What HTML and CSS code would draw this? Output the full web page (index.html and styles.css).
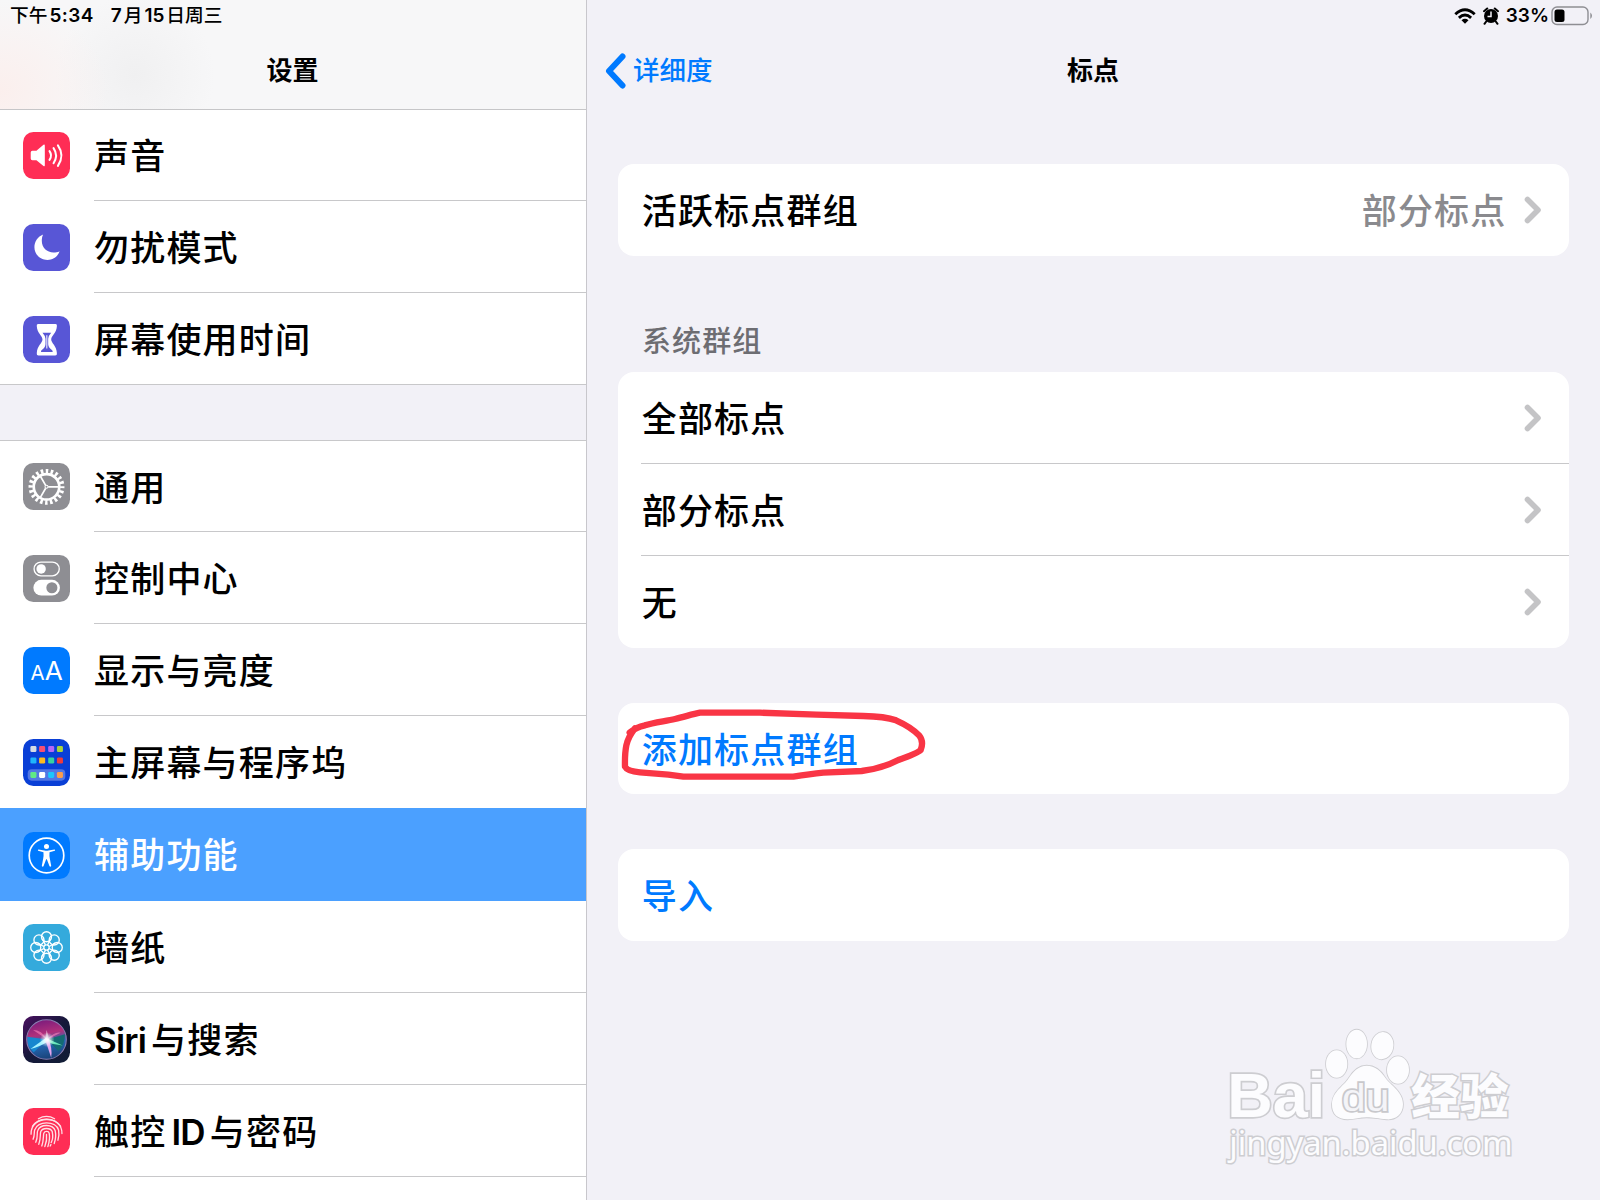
FILE: index.html
```html
<!DOCTYPE html>
<html lang="zh-CN">
  <head>
    <title>设置</title>
    <meta charset="utf-8">
    <link rel="stylesheet" href="styles.css">
  </head>
  <body>
    <div class="screen">
      <div class="sidebar">
        <div class="side-head">
          <div class="status"><span>下午</span><b class="time">5:34</b><b>7</b><span>月</span><b>15</b><span>日周三</span></div>
          <div class="title">设置</div>
        </div>
        <div class="list first">
          <div class="row">
            <svg class="icon" viewBox="0 0 140 140">
              <rect width="140" height="140" rx="31" fill="#ff2d55"/>
              <path d="M28 56H40L61 38Q65 36 65 41V99Q65 104 61 101L40 84H28Q23 84 23 79V61Q23 56 28 56Z" fill="#fff"/>
              <path d="M79 57Q88 70 79 83M91 48Q106 70 91 93M104 40Q125 70 104 101" fill="none" stroke="#fff" stroke-width="6" stroke-linecap="round"/>
            </svg>
            <div class="label">声音</div>
          </div>
          <div class="row">
            <svg class="icon" viewBox="0 0 140 140">
              <rect width="140" height="140" rx="31" fill="#5856d6"/>
              <path d="M60 31C44 37 34 52 34 69C34 90 51 107 73 107C90 107 104 97 109 81C103 84 97 85 91 85C71 85 56 70 56 50C56 43 57 37 60 31Z" fill="#fff"/>
            </svg>
            <div class="label">勿扰模式</div>
          </div>
          <div class="row">
            <svg class="icon" viewBox="0 0 140 140">
              <rect width="140" height="140" rx="31" fill="#5856d6"/>
              <path d="M45 24H97Q102 24 101 30C100 52 84 59 84 70S100 88 101 111Q102 118 96 118H46Q40 118 41 111C42 88 58 81 58 70S42 52 41 30Q40 24 45 24Z" fill="#fff"/>
              <path d="M58 50H84Q75 60 75 68V84Q76 95 86 101Q90 104 88 107H54Q52 104 56 101Q66 95 67 84V68Q67 60 58 50Z" fill="#5856d6"/>
              <path d="M71 57V97" stroke="#fff" stroke-width="3"/>
            </svg>
            <div class="label">屏幕使用时间</div>
          </div>
        </div>
        <div class="gap"></div>
        <div class="list second">
          <div class="row">
            <svg class="icon" viewBox="0 0 140 140">
              <rect width="140" height="140" rx="31" fill="#8e8e93"/>
              <g fill="none" stroke="#fff">
                <circle cx="70" cy="71" r="47" stroke-width="13" stroke-dasharray="7.5 7.265" stroke-dashoffset="3.700"/>
                <circle cx="70" cy="71" r="38" stroke-width="8"/>
                <path d="M75 71H108M67.500 66.700L51 38M67.500 75.300L51 104" stroke-width="5"/>
                <circle cx="70" cy="71" r="4.500" stroke-width="3"/>
              </g>
            </svg>
            <div class="label">通用</div>
          </div>
          <div class="row">
            <svg class="icon" viewBox="0 0 140 140">
              <rect width="140" height="140" rx="31" fill="#8e8e93"/>
              <rect x="33" y="21" width="75" height="41" rx="20.500" fill="none" stroke="#fff" stroke-width="4"/>
              <circle cx="54" cy="41.500" r="14" fill="#fff"/>
              <rect x="31" y="74" width="79" height="47" rx="23.500" fill="#fff"/>
              <circle cx="86" cy="97.500" r="16.500" fill="#8e8e93"/>
            </svg>
            <div class="label">控制中心</div>
          </div>
          <div class="row">
            <svg class="icon" viewBox="0 0 140 140">
              <rect width="140" height="140" rx="31" fill="#007aff"/>
              <g class="aa"><text x="22" y="99" font-size="61">A</text><text x="65" y="99" font-size="78">A</text></g>
            </svg>
            <div class="label">显示与亮度</div>
          </div>
          <div class="row before-selected">
            <svg class="icon" viewBox="0 0 140 140">
              <rect width="140" height="140" rx="31" fill="#0a3fd6"/>
              <rect x="14" y="90" width="112" height="34" rx="12" fill="#5277e4"/>
              <g>
                <rect x="22" y="21" width="18" height="18" rx="4" fill="#d6dbe4"/>
                <rect x="48" y="21" width="18" height="18" rx="4" fill="#f94f73"/>
                <rect x="75" y="21" width="18" height="18" rx="4" fill="#b666f6"/>
                <rect x="101" y="21" width="18" height="18" rx="4" fill="#a9d43c"/>
                <rect x="22" y="55" width="18" height="18" rx="4" fill="#1fb4fa"/>
                <rect x="48" y="55" width="18" height="18" rx="4" fill="#fdbb1f"/>
                <rect x="75" y="55" width="18" height="18" rx="4" fill="#36d3a0"/>
                <rect x="101" y="55" width="18" height="18" rx="4" fill="#f23a3a"/>
                <rect x="22" y="98" width="18" height="18" rx="4" fill="#60ea84"/>
                <rect x="48" y="98" width="18" height="18" rx="4" fill="#fff"/>
                <rect x="75" y="98" width="18" height="18" rx="4" fill="#1cc6fb"/>
                <rect x="101" y="98" width="18" height="18" rx="4" fill="#fb9d4b"/>
              </g>
            </svg>
            <div class="label">主屏幕与程序坞</div>
          </div>
          <div class="row selected">
            <svg class="icon" viewBox="0 0 140 140">
              <rect width="140" height="140" rx="31" fill="#007aff"/>
              <circle cx="70" cy="70" r="51.500" fill="none" stroke="#fff" stroke-width="5"/>
              <circle cx="70" cy="43" r="7.500" fill="#fff"/>
              <path d="M46 52L64 55Q70 56 76 55L94 52Q97 53 95 56L79 60Q78 72 80 80L84 101Q82 105 79 102L71 81H69L61 102Q58 105 56 101L60 80Q62 72 61 60L45 56Q43 53 46 52Z" fill="#fff"/>
            </svg>
            <div class="label">辅助功能</div>
          </div>
          <div class="row">
            <svg class="icon" viewBox="0 0 140 140">
              <rect width="140" height="140" rx="31" fill="#34aadc"/>
              <g fill="none" stroke="#fff" stroke-width="4">
                <circle cx="70" cy="38" r="15"/>
                <circle cx="93" cy="47.500" r="15"/>
                <circle cx="102" cy="70" r="15"/>
                <circle cx="93" cy="93" r="15"/>
                <circle cx="70" cy="102" r="15"/>
                <circle cx="47.500" cy="93" r="15"/>
                <circle cx="38" cy="70" r="15"/>
                <circle cx="47.500" cy="47.500" r="15"/>
                <circle cx="70" cy="70" r="8"/>
                <path d="M57 44L67 62M83 44L73 62M96 57L78 67M96 83L78 73M83 96L73 78M57 96L67 78M44 83L62 73M44 57L62 67"/>
              </g>
            </svg>
            <div class="label">墙纸</div>
          </div>
          <div class="row">
            <svg class="icon" viewBox="0 0 140 140">
              <defs>
                <linearGradient id="siri-bg" x1="0" y1="0" x2="1" y2="1">
                  <stop offset="0" stop-color="#4a1060"/>
                  <stop offset=".5" stop-color="#15183a"/>
                  <stop offset="1" stop-color="#101d35"/>
                </linearGradient>
                <linearGradient id="siri-orb" x1=".4" y1="0" x2=".6" y2="1">
                  <stop offset="0" stop-color="#7c1c7c"/>
                  <stop offset=".35" stop-color="#b0307c"/>
                  <stop offset=".6" stop-color="#2668b4"/>
                  <stop offset="1" stop-color="#183f74"/>
                </linearGradient>
                <radialGradient id="siri-glow">
                  <stop offset="0" stop-color="#fff"/>
                  <stop offset=".3" stop-color="#fff" stop-opacity=".75"/>
                  <stop offset="1" stop-color="#fff" stop-opacity="0"/>
                </radialGradient>
              </defs>
              <rect width="140" height="140" rx="31" fill="url(#siri-bg)"/>
              <circle cx="70" cy="70" r="59" fill="url(#siri-orb)" stroke="#8d7fb4" stroke-width="3"/>
              <path d="M72 70L125 54Q125 86 105 104Z" fill="#136b72"/>
              <path d="M72 70L13 62Q10 90 32 108Z" fill="#1687cf"/>
              <path d="M72 70L30 42Q55 42 72 70L112 50Q94 46 72 70Z" fill="#ef77b5" opacity=".7"/>
              <path d="M70 64L22 98Q50 92 74 76Z" fill="#a5f2ff"/>
              <path d="M70 66L118 88Q92 86 68 77Z" fill="#6be9bd"/>
              <path d="M66 70L84 124Q88 95 76 68Z" fill="#e3a5ee"/>
              <path d="M66 72L70 42Q76 54 76 72Z" fill="#fff" opacity=".5"/>
              <circle cx="72" cy="71" r="22" fill="url(#siri-glow)"/>
            </svg>
            <div class="label"><span class="siri">Siri</span>与搜索</div>
          </div>
          <div class="row">
            <svg class="icon" viewBox="0 0 140 140">
              <rect width="140" height="140" rx="31" fill="#ff2d55"/>
              <g fill="none" stroke="#ffe0e6" stroke-width="4" stroke-linecap="round">
                <path d="M46 32Q70 18 94 32"/>
                <path d="M28 55Q41 33 70 33T112 55"/>
                <path d="M24 78C22 20 118 20 116 76"/>
                <path d="M30 93C36 80 32 72 35 65C42 37 98 37 106 66C108 77 107 88 104 96"/>
                <path d="M38 102C46 84 40 75 44 67C52 47 89 47 96 68C99 82 97 94 93 106"/>
                <path d="M47 108C54 90 50 78 53 70C58 58 82 58 87 70C90 85 88 96 84 103"/>
                <path d="M56 113C62 96 60 84 62 75C65 68 76 68 78 75C81 90 78 103 74 115"/>
                <path d="M70 79C72 95 69 105 65 115M83 109L81 113"/>
              </g>
            </svg>
            <div class="label">触控<span class="latin">ID</span>与密码</div>
          </div>
        </div>
      </div>

      <div class="detail">
        <div class="status-right">
          <svg class="wifi" viewBox="0 0 22 16">
            <g fill="none" stroke="#000" stroke-width="2.900">
              <path d="M1.300 6.200Q11 -2.600 20.700 6.200"/>
              <path d="M4.900 9.800Q11 4.300 17.100 9.800"/>
            </g>
            <path d="M7.500 12.200Q11 9.300 14.500 12.200L11 15.700Z"/>
          </svg>
          <svg class="alarm" viewBox="0 0 16 18">
            <circle cx="8" cy="9" r="7"/>
            <path d="M1 4.200L4.200 1.500M15 4.200L11.800 1.500M3.200 14.500L1.500 16.800M12.800 14.500L14.500 16.800" stroke="#000" stroke-width="2" stroke-linecap="round"/>
            <path d="M8 4.500V9.500H4.500" fill="none" stroke="#f2f1f7" stroke-width="1.500"/>
          </svg>
          <b>33%</b>
          <svg class="battery" viewBox="0 0 42 20">
            <rect x="1" y="1" width="36" height="17.500" rx="5" fill="none" stroke="#8e8e93" stroke-width="1.400"/>
            <rect x="3.500" y="3.500" width="10" height="12.500" rx="2.500"/>
            <path d="M39.300 6.500Q41 8 41 9.700T39.300 13Z" fill="#8e8e93"/>
          </svg>
        </div>
        <div class="nav">
          <div class="back">
            <svg class="back-arrow" viewBox="0 0 22 36"><path d="M17.500 3.500L4 18L17.500 32.500" fill="none" stroke="#007aff" stroke-width="6" stroke-linecap="round" stroke-linejoin="round"/></svg>
            <span>详细度</span>
          </div>
          <div class="title">标点</div>
        </div>
        <div class="cards">
          <div class="card">
            <div class="item">
              <span>活跃标点群组</span><span class="value">部分标点</span>
              <svg class="chevron" viewBox="0 0 18 28"><path d="M3.500 3.500L14 14L3.500 24.500"/></svg>
            </div>
          </div>
          <div class="caption">系统群组</div>
          <div class="card">
            <div class="item">
              <span>全部标点</span>
              <svg class="chevron" viewBox="0 0 18 28"><path d="M3.500 3.500L14 14L3.500 24.500"/></svg>
            </div>
            <div class="item">
              <span>部分标点</span>
              <svg class="chevron" viewBox="0 0 18 28"><path d="M3.500 3.500L14 14L3.500 24.500"/></svg>
            </div>
            <div class="item">
              <span>无</span>
              <svg class="chevron" viewBox="0 0 18 28"><path d="M3.500 3.500L14 14L3.500 24.500"/></svg>
            </div>
          </div>
          <div class="card spaced">
            <div class="item link"><span>添加标点群组</span></div>
            <!-- hand-drawn ring over the link -->
            <svg class="ring" viewBox="0 0 1050 360">
              <path d="M89 128Q108 111 135 106C160 97 195 94 225 87C255 80 278 72 300 68H480L650 74L790 78Q855 79 888 91Q935 112 958 137Q972 155 962 180Q952 190 895 210Q845 236 785 243L670 248Q630 252 580 260H250L205 254L120 247Q82 244 75 230Q74 190 79 166Q85 140 105 115"/>
            </svg>
          </div>
          <div class="card spaced">
            <div class="item link"><span>导入</span></div>
          </div>
        </div>
        <svg class="watermark" viewBox="0 0 1020 540">
          <g class="mark">
            <text x="82" y="322" class="bai" textLength="294" lengthAdjust="spacingAndGlyphs">Bai</text>
            <ellipse cx="410" cy="162" rx="32" ry="41"/>
            <ellipse cx="470" cy="102" rx="31" ry="43"/>
            <ellipse cx="547" cy="107" rx="33" ry="41" transform="rotate(8 547 107)"/>
            <ellipse cx="594" cy="180" rx="33" ry="41"/>
            <path d="M500 167C525 167 545 185 557 205C570 225 609 245 609 283C609 315 585 330 560 328C535 326 520 322 500 322S465 328 443 328C413 328 395 312 396 282C397 245 432 228 446 205C458 185 477 167 500 167Z"/>
            <text x="426" y="302" class="du" textLength="142" lengthAdjust="spacingAndGlyphs">du</text>
            <text x="634" y="311" class="jy" textLength="292" lengthAdjust="spacingAndGlyphs">经验</text>
            <text x="88" y="436" class="url" textLength="850" lengthAdjust="spacingAndGlyphs">jingyan.baidu.com</text>
          </g>
        </svg>
      </div>
    </div>
  </body>
</html>
```
FILE: styles.css
```css
body {
  font-family: Inter, "Noto Sans CJK SC", sans-serif;
  background: #f2f1f7;
  color: #000;
  margin: 0;
  padding: 0;
}

.screen {
  display: flex;
  width: 1600px;
  height: 1200px;
  overflow: hidden;
}
.title {
  font-size: 26px;
  font-weight: 700;
  line-height: 40px;
  text-align: center;
}

/* Left column. */
.sidebar {
  box-sizing: border-box;
  width: 587px;
  flex: none;
  border-right: 1px solid #c8c7cc;
  overflow: hidden;
}
.side-head {
  box-sizing: border-box;
  position: relative;
  height: 110px;
  border-bottom: 1px solid #c6c6c8;
  background:
    radial-gradient(ellipse 110px 90px at 0 90px, #fbefed, rgba(251, 239, 237, 0)),
    radial-gradient(ellipse 80px 80px at 135px 75px, #f0f0f1, rgba(240, 240, 241, 0)),
    #f7f7f8;
}
.status {
  display: flex;
  height: 31px;
  padding-left: 10px;
  font-size: 18.7px;
  font-weight: 500;
  line-height: 31px;
}
.status b,
.status-right b {
  font-size: 19px;
  font-weight: 600;
  padding: 0 2px;
}
.status .time {
  letter-spacing: 0.4px;
  margin-right: 13px;
}
.side-head .title {
  padding: 20px 1px 0 0;
}
.list {
  background: #fff;
}
.row {
  display: flex;
  align-items: center;
  height: 92.14px;
  padding-left: 23.4px;
}
.first {
  height: 275px;
  margin-top: -1px;
}
.second {
  height: 770px;
}
.icon {
  width: 47px;
  height: 47px;
  flex: none;
  margin-right: 23.6px;
}
.second .icon {
  margin-top: 1px;
}
.aa {
  font-family: Inter, sans-serif;
  font-weight: 400;
  fill: #fff;
}
.label {
  box-sizing: border-box;
  flex: 1;
  height: 100%;
  border-bottom: 1px solid #c8c8ca;
  font-size: 35px;
  font-weight: 500;
  line-height: 94px;
  letter-spacing: 1.2px;
  white-space: nowrap;
}
.first .row:last-child .label {
  border-bottom: 0;
}
.gap {
  box-sizing: border-box;
  height: 56.5px;
  border-top: 1px solid #c8c8ca;
  border-bottom: 1px solid #c8c8ca;
}
/* the first row of the second block is a touch shorter */
.second .row:first-child {
  height: 91.6px;
}
.before-selected .label {
  border-color: transparent;
}
.selected {
  background: #4ba0ff;
  color: #fff;
}
.selected .label {
  border-color: #4ba0ff;
}
.siri,
.latin {
  letter-spacing: -0.8px;
  font-weight: 600;
}
.siri {
  margin-right: 5px;
}
.latin {
  margin: 0 5px;
}

/* Right column. */
.detail {
  position: relative;
  flex: 1;
}
.status-right {
  display: flex;
  align-items: center;
  justify-content: flex-end;
  height: 31px;
  padding-right: 7px;
}
.wifi {
  width: 22px;
  height: 16px;
  margin-right: 7px;
}
.alarm {
  width: 16px;
  height: 18px;
  margin-right: 5px;
}
.battery {
  width: 42px;
  height: 20px;
}
.nav {
  display: grid;
  grid-template-columns: 1fr auto 1fr;
  align-items: center;
  height: 79px;
  padding: 0 32px 0 18px;
}
.nav .title {
  padding-left: 13px;
}
.back {
  display: flex;
  align-items: center;
  color: #007aff;
  font-size: 26.5px;
  font-weight: 500;
  line-height: 40px;
}
.back span {
  padding-bottom: 1px;
}
.back-arrow {
  width: 22px;
  height: 36px;
  margin-right: 6px;
}
.cards {
  padding: 54px 31.5px 0 31px;
}
.card {
  position: relative;
  border-radius: 16px;
  background: #fff;
}
.card.spaced {
  margin-top: 55px;
}
.item {
  box-sizing: border-box;
  display: flex;
  align-items: center;
  height: 92px;
  margin-left: 23px;
  padding-right: 27px;
  font-size: 35px;
  font-weight: 500;
  letter-spacing: 1.2px;
}
.item span {
  padding: 0 0 3px 0.7px;
}
.item + .item {
  border-top: 1px solid #c8c8ca;
}
/* keeps the two dividers 92px apart, half a pixel up */
.item:first-child:not(:last-child) {
  height: 91.4px;
}
.item:last-child:not(:first-child) {
  height: 92.6px;
}
.item .value {
  margin-left: auto;
  color: #8a8a8e;
}
.chevron {
  width: 18px;
  height: 28px;
  margin-left: auto;
  fill: none;
  stroke: #c4c4c6;
  stroke-width: 5.6;
  stroke-linecap: round;
  stroke-linejoin: round;
}
.value + .chevron {
  margin-left: 17px;
}
.link {
  color: #007aff;
}
.caption {
  height: 30.5px;
  padding: 69.5px 0 16px 24px;
  color: #6d6d72;
  font-size: 29px;
  font-weight: 500;
  line-height: 32px;
  letter-spacing: 1.1px;
}
.ring {
  position: absolute;
  left: -18px;
  top: -13px;
  width: 350px;
  height: 120px;
  fill: none;
  stroke: #f93545;
  stroke-width: 19;
  stroke-linecap: round;
  stroke-linejoin: round;
}

/* Watermark in the corner. */
.watermark {
  position: absolute;
  left: 613px;
  top: 1010px;
  width: 340px;
  height: 180px;
}
.mark {
  fill: #fcfcfe;
  stroke: #cdcdd1;
  stroke-width: 5;
  paint-order: stroke;
}
.bai {
  font: 700 190px "Liberation Sans", sans-serif;
  stroke-width: 10;
}
.du {
  font: 400 118px "Liberation Sans", sans-serif;
  fill: #f4f4f8;
  stroke: #c8c8cc;
  stroke-width: 10;
}
.jy {
  font: 900 142px "Noto Sans CJK SC", sans-serif;
  stroke-width: 9;
}
.url {
  font: 400 96px "Noto Sans", sans-serif;
  stroke-width: 9;
}
```
